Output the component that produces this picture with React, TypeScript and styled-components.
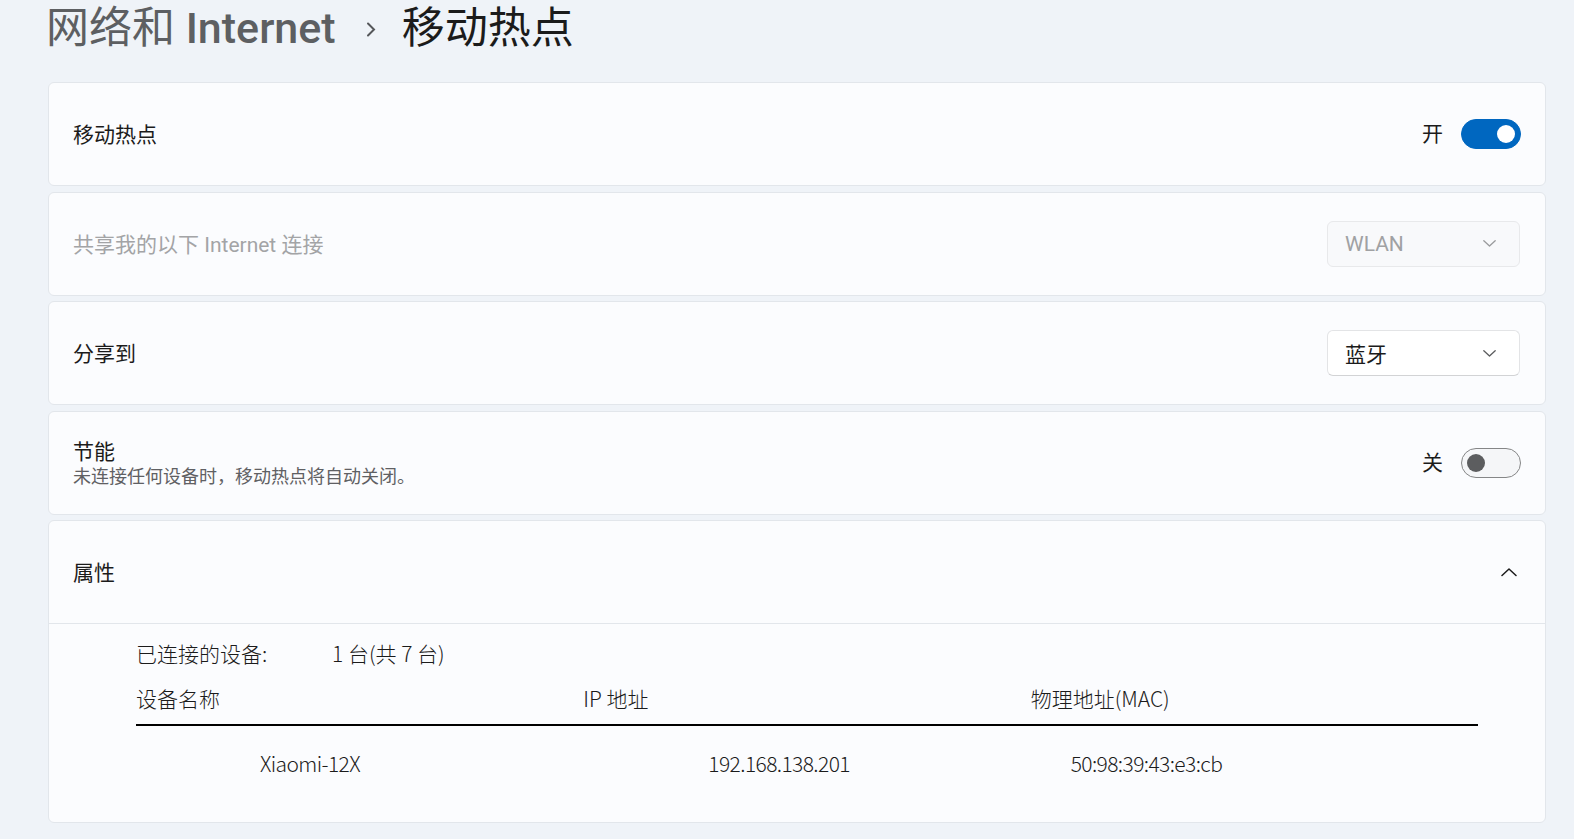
import styled, { createGlobalStyle } from 'styled-components';

const GlobalStyle = createGlobalStyle`
    html, body {
        margin: 0;
        padding: 0;
        background: #eff3f8;
    }
    body {
        font-family: Roboto, "Noto Sans CJK SC", sans-serif;
        color: #1b1b1b;
    }
`;

const Page = styled.div`
    width: 1574px;
    height: 839px;
    overflow: hidden;
    box-sizing: border-box;
    padding: 0 28px 0 48px;
`;

const Breadcrumb = styled.h1`
    margin: 0 0 26px -2px;
    height: 56px;
    display: flex;
    align-items: center;
    font-size: 43px;
    font-weight: 400;
    line-height: 56px;
    .parent {
        color: #5d5f62;
    }
    .latin {
        font-weight: 500;
    }
    svg {
        margin: 3px 26px 0 30px;
    }
`;

const Stack = styled.div`
    display: flex;
    flex-direction: column;
    gap: 5.5px;
`;

const Card = styled.section`
    background: #fbfcfe;
    border: 1px solid #e2e6eb;
    border-radius: 6px;
`;

const Row = styled.div<{ $right?: number }>`
    height: 102px;
    box-sizing: border-box;
    display: flex;
    align-items: center;
    padding: 0 ${({ $right }) => $right ?? 24}px 0 24px;
    gap: 16px;
`;

const Texts = styled.div<{ $shift?: number }>`
    flex: 1;
    display: flex;
    flex-direction: column;
    padding-top: ${({ $shift }) => $shift ?? 2}px;
`;

const Label = styled.div<{ $disabled?: boolean }>`
    font-size: 21px;
    line-height: 28px;
    color: ${({ $disabled }) => ($disabled ? '#a3a4a6' : '#1b1b1b')};
`;

const Caption = styled.div`
    font-size: 18px;
    line-height: 21px;
    color: #5f6063;
`;

const StateText = styled.span`
    font-size: 21px;
    line-height: 30px;
    margin-right: 2px;
`;

const Switch = styled.div<{ $on?: boolean }>`
    width: 60px;
    height: 30px;
    box-sizing: border-box;
    border-radius: 15px;
    display: flex;
    align-items: center;
    padding: 0 5px;
    justify-content: ${({ $on }) => ($on ? 'flex-end' : 'flex-start')};
    background: ${({ $on }) => ($on ? '#0067c0' : '#f5f6f8')};
    border: 1.5px solid ${({ $on }) => ($on ? '#0067c0' : '#858687')};
    &::after {
        content: '';
        width: 18px;
        height: 18px;
        border-radius: 50%;
        background: ${({ $on }) => ($on ? '#ffffff' : '#5c5d5f')};
    }
`;

const Select = styled.div<{ $disabled?: boolean }>`
    width: 193px;
    height: 46px;
    box-sizing: border-box;
    display: flex;
    align-items: center;
    justify-content: space-between;
    padding: 0 23px 0 17px;
    border-radius: 6px;
    font-size: 21px;
    background: ${({ $disabled }) => ($disabled ? '#f8f9fb' : '#ffffff')};
    color: ${({ $disabled }) => ($disabled ? '#a0a1a3' : '#1b1b1b')};
    border: 1px solid ${({ $disabled }) => ($disabled ? '#e8e9eb' : '#e3e4e6')};
    border-bottom-color: ${({ $disabled }) => ($disabled ? '#e8e9eb' : '#d2d3d5')};
`;

const Details = styled.div`
    border-top: 1px solid #e2e6eb;
    padding: 14px 67px 0 87px;
    font-family: "Noto Sans CJK SC", sans-serif;
    font-weight: 300;
    font-size: 21px;
    line-height: 30px;
    height: 199px;
    box-sizing: border-box;
`;

const Summary = styled.div`
    display: flex;
    span:first-child {
        width: 196px;
    }
`;

const Grid = styled.div<{ $head?: boolean }>`
    display: grid;
    grid-template-columns: repeat(3, 1fr);
    margin-top: ${({ $head }) => ($head ? 15 : 22)}px;
    padding-bottom: ${({ $head }) => ($head ? 11 : 0)}px;
    border-bottom: ${({ $head }) => ($head ? '2px solid #000' : 'none')};
`;

// device values sit a little tighter than the headings
const Cell = styled.div<{ $indent?: number; $value?: boolean }>`
    padding-left: ${({ $indent }) => $indent ?? 0}px;
    white-space: nowrap;
    letter-spacing: ${({ $value }) => ($value ? '-0.6px' : 'normal')};
`;

const Chevron = ({ dir, size, color }: { dir: 'down' | 'up'; size: number; color: string }) => (
    <svg width={size} height={size / 2 + 2} viewBox="0 0 16 10" fill="none">
        <path
            d={dir === 'down' ? 'M1 2 L8 8.5 L15 2' : 'M1 8.5 L8 2 L15 8.5'}
            stroke={color}
            strokeWidth={dir === 'down' ? 1.6 : 1.5}
            strokeLinecap="round"
            strokeLinejoin="round"
        />
    </svg>
);

const devices = [{ name: 'Xiaomi-12X', ip: '192.168.138.201', mac: '50:98:39:43:e3:cb' }];

export default function App() {
    return (
        <Page>
            <GlobalStyle />
            <Breadcrumb>
                <span className="parent">
                    网络和 <span className="latin">Internet</span>
                </span>
                <svg width="10" height="15" viewBox="0 0 10 15" fill="none">
                    <path d="M2 1.5 L8 7.5 L2 13.5" stroke="#55575a" strokeWidth="2" strokeLinecap="round" />
                </svg>
                <span>移动热点</span>
            </Breadcrumb>

            <Stack>
                <Card>
                    <Row>
                        <Texts>
                            <Label>移动热点</Label>
                        </Texts>
                        <StateText>开</StateText>
                        <Switch $on />
                    </Row>
                </Card>

                <Card>
                    <Row $right={25}>
                        <Texts>
                            <Label $disabled>共享我的以下 Internet 连接</Label>
                        </Texts>
                        <Select $disabled>
                            WLAN
                            <Chevron dir="down" size={13} color="#9a9b9d" />
                        </Select>
                    </Row>
                </Card>

                <Card>
                    <Row $right={25}>
                        <Texts>
                            <Label>分享到</Label>
                        </Texts>
                        <Select>
                            蓝牙
                            <Chevron dir="down" size={13} color="#5c5d5f" />
                        </Select>
                    </Row>
                </Card>

                <Card>
                    <Row>
                        <Texts $shift={0}>
                            <Label>节能</Label>
                            <Caption>未连接任何设备时，移动热点将自动关闭。</Caption>
                        </Texts>
                        <StateText>关</StateText>
                        <Switch />
                    </Row>
                </Card>

                <Card>
                    <Row $right={28}>
                        <Texts>
                            <Label>属性</Label>
                        </Texts>
                        <Chevron dir="up" size={16} color="#1b1b1b" />
                    </Row>
                    <Details>
                        <Summary>
                            <span>已连接的设备:</span>
                            <span>1 台(共 7 台)</span>
                        </Summary>
                        <Grid $head>
                            <Cell>设备名称</Cell>
                            <Cell>IP 地址</Cell>
                            <Cell>物理地址(MAC)</Cell>
                        </Grid>
                        {devices.map((d) => (
                            <Grid key={d.mac}>
                                <Cell $value $indent={124}>{d.name}</Cell>
                                <Cell $value $indent={125}>{d.ip}</Cell>
                                <Cell $value $indent={40}>{d.mac}</Cell>
                            </Grid>
                        ))}
                    </Details>
                </Card>
            </Stack>
        </Page>
    );
}
